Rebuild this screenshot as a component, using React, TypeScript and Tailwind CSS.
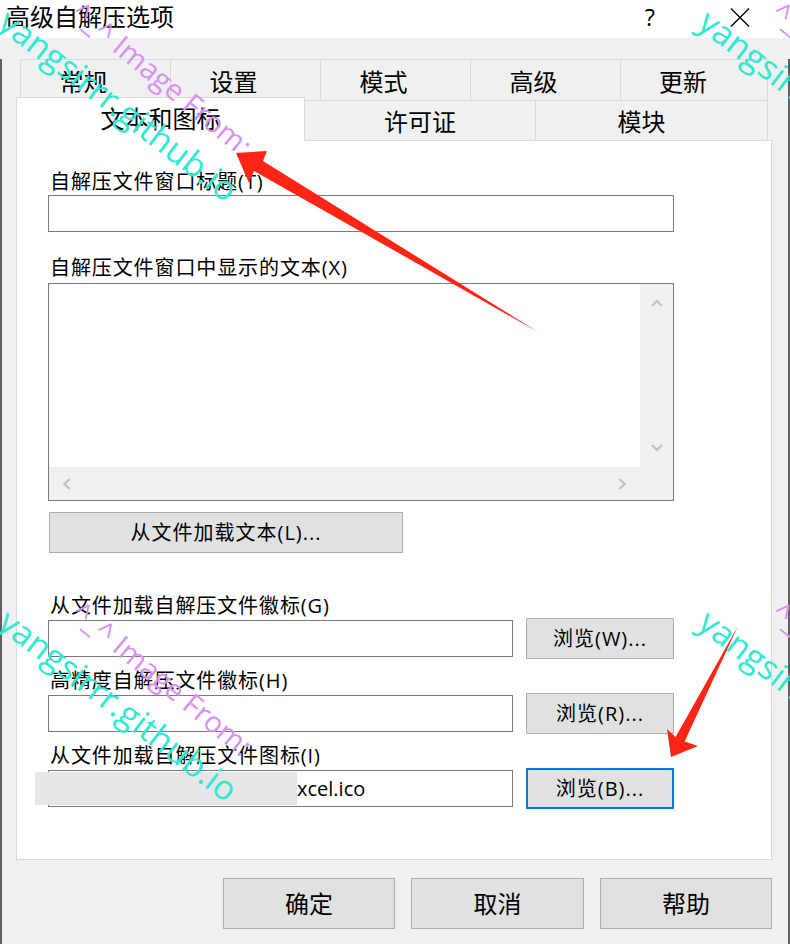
const ui = "font-['Open_Sans','Noto_Sans_CJK_SC',sans-serif]";

function Chevron({ dir }: { dir: "up" | "down" | "left" | "right" }) {
  if (dir === "up" || dir === "down") {
    return (
      <svg width="12" height="10" viewBox="0 0 12 10">
        <polyline
          points={dir === "up" ? "1,8 6,3 11,8" : "1,2 6,7 11,2"}
          fill="none"
          stroke="#c4c4c4"
          strokeWidth="2.4"
        />
      </svg>
    );
  }
  return (
    <svg width="8" height="12" viewBox="0 0 8 12">
      <polyline
        points={dir === "left" ? "6.5,1 1.5,6 6.5,11" : "1.5,1 6.5,6 1.5,11"}
        fill="none"
        stroke="#c4c4c4"
        strokeWidth="2.4"
      />
    </svg>
  );
}

function BrowseRow({ keyName, focused, children }: { keyName: string; focused?: boolean; children?: React.ReactNode }) {
  return (
    <div className="flex h-[41px] items-center gap-[13px]">
      <div className="flex h-[37px] w-[465px] items-center border border-[#7a7a7a] bg-white">{children}</div>
      <button
        className={
          focused
            ? "h-[41px] w-[148px] border-2 border-[#0078d7] bg-[#e1e1e1] text-[20px] leading-none tracking-[1px]"
            : "h-[41px] w-[148px] border border-[#adadad] bg-[#e1e1e1] text-[20px] leading-none tracking-[1px]"
        }
      >
        浏览({keyName})...
      </button>
    </div>
  );
}

function Label({ text, className = "" }: { text: string; className?: string }) {
  return <div className={`h-[24px] pl-[2px] text-[20px] leading-[24px] tracking-[0.9px] ${className}`}>{text}</div>;
}

function Watermark({ pos }: { pos: string }) {
  return (
    <div className={`pointer-events-none absolute z-20 h-[220px] w-[300px] ${pos}`}>
      <span className="absolute left-[14px] top-[3px] origin-top-left rotate-[37.5deg] whitespace-nowrap font-['Open_Sans',sans-serif] text-[34px] font-medium leading-none text-[#31e8d5]">
        yangsirrr.github.io
      </span>
      <span className="absolute left-[86px] top-[-4px] origin-top-left rotate-[39.5deg] whitespace-nowrap font-['Open_Sans',sans-serif] text-[29px] leading-none text-[#da8ff2]">
        ^_^ Image From:
      </span>
    </div>
  );
}

export default function App() {
  return (
    <div className={`relative h-[944px] w-[790px] overflow-hidden bg-[#f0f0f0] text-black ${ui}`}>
      {/* title bar */}
      <div className="flex h-[38px] items-center bg-white">
        <div className="flex-1 pb-[4px] pl-[6px] text-[24px] leading-none">高级自解压选项</div>
        <div className="flex w-[90px] justify-center pb-[4px] text-[23px] leading-none">?</div>
        <div className="mr-[5px] flex w-[90px] justify-center pb-[4px]">
          <svg width="20" height="19" viewBox="0 0 20 19">
            <path d="M1 0.5 L19 18.5 M19 0.5 L1 18.5" stroke="#000" strokeWidth="1.4" />
          </svg>
        </div>
      </div>

      <div className="h-[906px] border-x-2 border-[#5f5f5f] pl-[14px]">
        {/* tabs row 1 */}
        <div className="ml-[4px] mt-[21px] flex h-[41px]">
          {["常规", "设置", "模式", "高级"].map((t) => (
            <div key={t} className="flex w-[150px] items-center justify-center border-l border-t border-[#d9d9d9] pr-[24px] pt-[4px] text-[24px] leading-none">
              {t}
            </div>
          ))}
          <div className="flex w-[148px] items-center justify-center border-x border-t border-[#d9d9d9] pr-[22px] pt-[4px] text-[24px] leading-none">
            更新
          </div>
        </div>

        {/* tabs row 2 */}
        <div className="flex h-[40px] items-start">
          <div className="relative z-10 -mt-[3px] flex h-[44px] w-[289px] items-center justify-center border-x border-t border-[#d9d9d9] bg-white pb-[2px] text-[24px] leading-none">
            文本和图标
          </div>
          <div className="flex h-[40px] w-[230px] items-center justify-center border-t border-[#d9d9d9] pt-[3px] text-[24px] leading-none">
            许可证
          </div>
          <div className="flex h-[40px] w-[233px] items-center justify-center border-x border-t border-[#d9d9d9] pr-[20px] pt-[3px] text-[24px] leading-none">
            模块
          </div>
        </div>

        {/* panel */}
        <div className="h-[720px] w-[756px] border border-[#d9d9d9] bg-white pl-[31px]">
          <Label text="自解压文件窗口标题(T)" className="mb-[1px] mt-[29px]" />
          <div className="h-[37px] w-[626px] border border-[#7a7a7a] bg-white" />

          <Label text="自解压文件窗口中显示的文本(X)" className="mb-[3px] mt-[24px]" />
          <div className="grid h-[218px] w-[626px] grid-cols-[1fr_33px] grid-rows-[1fr_33px] border border-[#7a7a7a] bg-[#f0f0f0]">
            <div className="bg-white" />
            <div className="flex flex-col items-center justify-between py-[14px]">
              <Chevron dir="up" />
              <Chevron dir="down" />
            </div>
            <div className="flex items-center justify-between px-[14px]">
              <Chevron dir="left" />
              <Chevron dir="right" />
            </div>
            <div />
          </div>

          <button className="ml-[1px] mt-[11px] h-[41px] w-[354px] border border-[#adadad] bg-[#e1e1e1] text-[20px] leading-none tracking-[1px]">
            从文件加载文本(L)...
          </button>

          <Label text="从文件加载自解压文件徽标(G)" className="mt-[41px]" />
          <BrowseRow keyName="W" />
          <Label text="高精度自解压文件徽标(H)" className="mt-[10px]" />
          <BrowseRow keyName="R" />
          <Label text="从文件加载自解压文件图标(I)" className="mt-[10px]" />
          <BrowseRow keyName="B" focused>
            <span className="pl-[248px] text-[20px] leading-none">xcel.ico</span>
          </BrowseRow>
        </div>

        {/* dialog buttons */}
        <div className="ml-[207px] mt-[18px] flex gap-[16px]">
          <button className="h-[51px] w-[172px] border border-[#adadad] bg-[#e1e1e1] text-[24px] leading-none">确定</button>
          <button className="h-[51px] w-[173px] border border-[#adadad] bg-[#e1e1e1] text-[24px] leading-none">取消</button>
          <button className="h-[51px] w-[172px] border border-[#adadad] bg-[#e1e1e1] text-[24px] leading-none">帮助</button>
        </div>
      </div>

      {/* redaction over the icon path */}
      <div className="absolute z-20 left-[35px] top-[772px] h-[33px] w-[262px] bg-[#e6e6e6]" />

      <Watermark pos="left-0 top-0" />
      <Watermark pos="left-[700px] top-0" />
      <Watermark pos="left-0 top-[600px]" />
      <Watermark pos="left-[700px] top-[600px]" />

      {/* annotation arrows */}
      <svg className="pointer-events-none absolute left-0 top-0 z-30" width="790" height="944" viewBox="0 0 790 944">
        <polygon points="236,153 267,151 263,161 538,332 254,171 249,183" fill="#fe2516" />
        <polygon points="671,757 698,746 684.6,741.5 738,626 675.6,736.9 667,729" fill="#fe2516" />
      </svg>
    </div>
  );
}
